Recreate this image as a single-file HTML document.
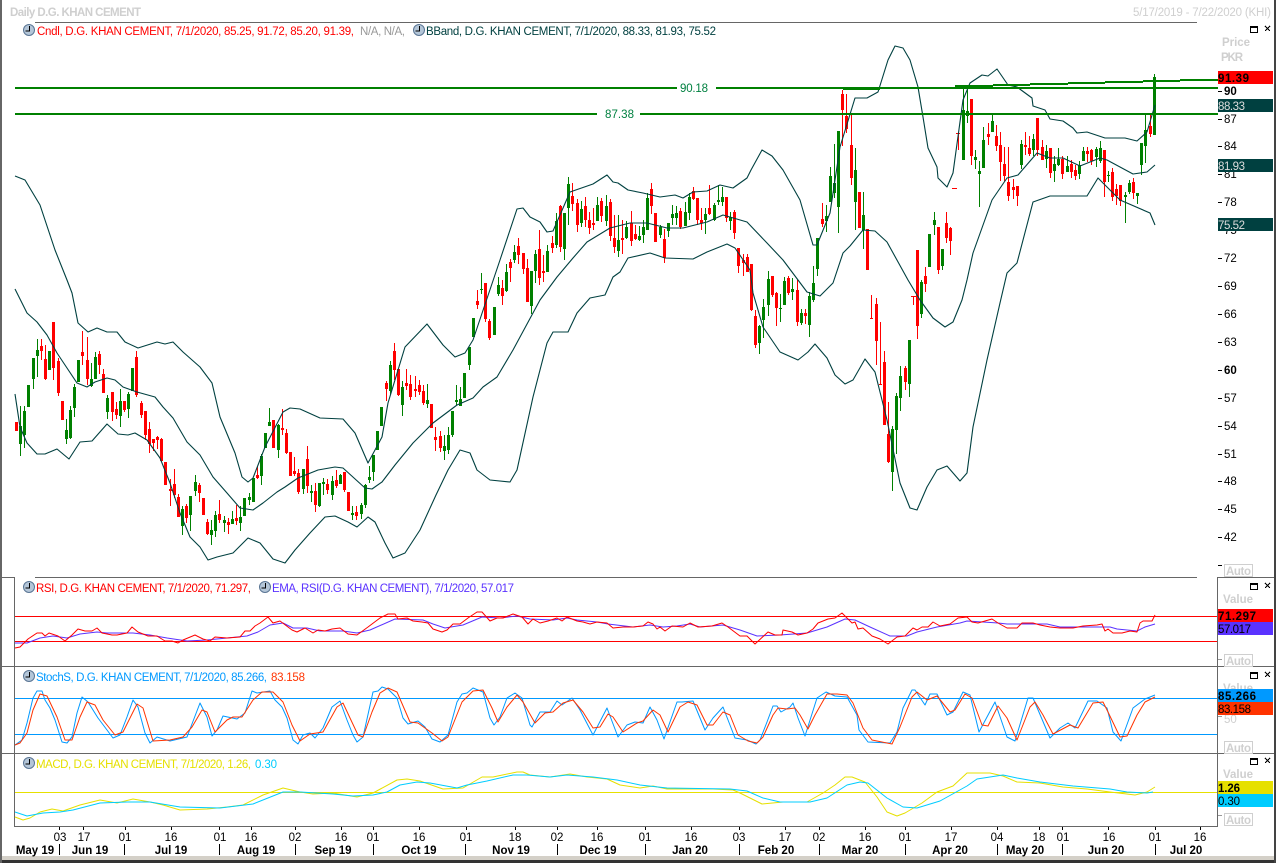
<!DOCTYPE html>
<html><head><meta charset="utf-8"><title>Daily D.G. KHAN CEMENT</title>
<style>
html,body{margin:0;padding:0;background:#fff}
svg{display:block}
text{font-family:"Liberation Sans",sans-serif;font-size:11.5px}
.b{font-weight:bold}
.l{fill:none;stroke-width:1;shape-rendering:crispEdges}
.s{fill:none;stroke-width:1;stroke-linejoin:round}
</style></head><body>
<svg width="1276" height="863" viewBox="0 0 1276 863" xmlns="http://www.w3.org/2000/svg">
<rect width="1276" height="863" fill="#fff"/>
<g shape-rendering="crispEdges">
<path fill="none" stroke="#008000" stroke-width="1" d="M20.5 406V456M24.5 406V448M28.5 385V407M33.5 358V389M37.5 339V377M49.5 351V370M66.5 419V444M70.5 406V439M74.5 384V417M78.5 360V382M91.5 363V387M95.5 352V379M107.5 395V419M120.5 389V427M128.5 392V418M132.5 368V391M182.5 506V535M190.5 496V531M195.5 475V496M211.5 520V545M215.5 511V537M224.5 516V532M232.5 511V524M240.5 506V531M244.5 498V516M249.5 493V505M253.5 478V502M261.5 454V485M265.5 433V448M269.5 408V426M278.5 424V458M303.5 469V494M311.5 485V502M319.5 483V507M323.5 478V495M332.5 476V500M340.5 474V484M352.5 506V520M361.5 503V519M365.5 484V508M369.5 466V483M373.5 455V481M377.5 431V450M381.5 407V426M390.5 361V395M402.5 381V416M427.5 384V408M444.5 435V460M448.5 427V454M452.5 411V437M456.5 385V405M460.5 387V406M464.5 373V398M469.5 347V370M473.5 318V337M481.5 273V294M494.5 307V335M498.5 277V296M506.5 264V292M514.5 245V263M531.5 271V314M535.5 250V283M547.5 245V272M556.5 213V248M564.5 213V260M568.5 177V225M581.5 201V227M597.5 197V221M606.5 195V226M618.5 215V257M626.5 221V239M639.5 226V241M643.5 220V243M647.5 193V230M660.5 225V238M668.5 223V237M672.5 205V225M676.5 206V225M685.5 202V226M689.5 193V220M705.5 208V234M714.5 203V221M718.5 185V205M722.5 187V206M730.5 212V230M759.5 325V354M763.5 299V338M768.5 271V316M780.5 294V322M784.5 277V305M792.5 278V300M801.5 309V325M809.5 292V337M813.5 266V302M817.5 238V276M826.5 205V232M830.5 167V202M834.5 144V198M838.5 131V233M855.5 148V230M863.5 192V249M892.5 426V491M896.5 393V454M900.5 366V411M909.5 340V397M921.5 280V318M929.5 234V267M934.5 212V235M942.5 249V270M963.5 87V160M967.5 88V123M975.5 150V169M979.5 161V207M983.5 127V168M992.5 115V132M1021.5 140V169M1033.5 134V156M1046.5 145V168M1054.5 156V182M1058.5 148V166M1067.5 156V172M1079.5 161V179M1083.5 147V161M1096.5 147V167M1100.5 141V163M1108.5 171V182M1125.5 192V223M1129.5 180V194M1137.5 193V204M1141.5 143V175M1145.5 114V163M1154.5 74V135"/>
<path fill="none" stroke="#008000" stroke-width="3" d="M20.5 426V444M24.5 411V435M28.5 385V407M33.5 358V379M37.5 350V356M49.5 351V370M66.5 430V439M70.5 410V438M74.5 387V408M78.5 360V382M91.5 379V386M95.5 357V379M107.5 398V412M120.5 401V416M128.5 394V409M132.5 368V391M182.5 509V526M190.5 496V515M195.5 482V491M211.5 530V535M215.5 515V531M224.5 520V523M232.5 519V524M240.5 517V523M244.5 498V516M249.5 497V500M253.5 478V502M261.5 456V476M265.5 433V448M269.5 422V426M278.5 425V450M303.5 469V489M311.5 491V493M319.5 483V506M323.5 482V484M332.5 481V495M340.5 475V484M352.5 513V515M361.5 505V514M365.5 485V505M369.5 477V480M373.5 455V472M377.5 431V450M381.5 407V426M390.5 365V391M402.5 387V405M427.5 400V404M444.5 446V451M448.5 435V450M452.5 411V435M456.5 400V402M460.5 399V406M464.5 373V398M469.5 347V365M473.5 318V337M481.5 289V290M494.5 307V335M498.5 285V294M506.5 272V291M514.5 252V260M531.5 271V306M535.5 254V271M547.5 251V272M556.5 221V245M564.5 213V249M568.5 184V208M581.5 209V223M597.5 205V221M606.5 206V221M618.5 240V251M626.5 227V238M639.5 236V240M643.5 227V235M647.5 198V230M660.5 227V235M668.5 223V231M672.5 214V218M676.5 213V218M685.5 212V226M689.5 197V213M705.5 214V220M714.5 205V220M718.5 200V202M722.5 197V202M730.5 217V221M759.5 326V343M763.5 307V320M768.5 279V305M780.5 308V309M784.5 281V305M792.5 289V292M801.5 313V323M809.5 296V325M813.5 283V300M817.5 238V269M826.5 216V221M830.5 176V202M834.5 183V193M838.5 131V207M855.5 170V202M863.5 215V230M892.5 429V472M896.5 396V430M900.5 376V398M909.5 340V384M921.5 282V314M929.5 234V267M934.5 220V225M942.5 249V266M963.5 110V160M967.5 111V116M975.5 157V160M979.5 171V174M983.5 140V168M992.5 121V132M1021.5 144V165M1033.5 139V150M1046.5 151V159M1054.5 164V171M1058.5 159V165M1067.5 166V172M1079.5 165V174M1083.5 151V161M1096.5 149V157M1100.5 148V161M1108.5 175V176M1125.5 195V197M1129.5 183V192M1137.5 193V196M1141.5 143V165M1145.5 130V146M1154.5 77V135"/>
<path fill="none" stroke="#ff0000" stroke-width="1" d="M16.5 422V431M41.5 339V360M45.5 345V380M53.5 322V380M58.5 358V396M62.5 401V420M82.5 331V365M87.5 337V385M99.5 351V374M103.5 369V393M112.5 392V421M116.5 402V419M124.5 401V412M136.5 351V397M141.5 401V418M145.5 411V440M149.5 422V453M153.5 439V451M157.5 436V449M161.5 438V462M165.5 462V485M170.5 479V506M174.5 469V498M178.5 494V517M186.5 504V523M199.5 483V502M203.5 498V515M207.5 519V535M219.5 500V523M228.5 518V534M236.5 505V525M257.5 466V479M273.5 420V448M282.5 409V435M286.5 429V454M290.5 452V476M294.5 457V476M298.5 469V494M307.5 446V493M315.5 483V512M327.5 479V494M336.5 470V488M344.5 472V492M348.5 492V511M356.5 506V520M386.5 381V401M394.5 343V380M398.5 369V396M406.5 369V390M410.5 375V400M415.5 376V397M419.5 380V395M423.5 385V405M431.5 404V428M435.5 427V451M440.5 431V452M477.5 290V309M485.5 283V322M489.5 319V340M502.5 280V305M510.5 259V282M518.5 238V264M523.5 253V274M527.5 259V302M539.5 230V285M543.5 255V282M552.5 236V253M560.5 205V252M572.5 183V211M577.5 199V232M585.5 197V227M589.5 212V234M593.5 208V230M601.5 198V222M610.5 199V241M614.5 215V253M622.5 220V254M631.5 211V246M635.5 225V240M651.5 183V214M655.5 213V242M664.5 229V263M680.5 208V229M693.5 187V200M697.5 198V225M701.5 208V230M709.5 185V215M726.5 197V222M734.5 210V239M738.5 248V273M743.5 254V276M747.5 254V272M751.5 264V311M755.5 310V348M772.5 276V297M776.5 292V326M788.5 276V295M797.5 280V326M805.5 309V324M822.5 203V227M842.5 90V146M846.5 94V133M851.5 115V185M859.5 192V228M867.5 229V270M871.5 295V319M876.5 298V365M880.5 322V385M884.5 351V425M888.5 402V463M905.5 366V390M913.5 296V305M917.5 250V339M925.5 267V292M938.5 227V274M946.5 212V243M950.5 227V255M958.5 132V150M971.5 99V165M988.5 123V145M996.5 125V151M1000.5 132V181M1004.5 147V181M1008.5 147V201M1013.5 179V199M1017.5 186V206M1025.5 132V155M1029.5 136V156M1037.5 118V156M1042.5 140V160M1050.5 148V178M1062.5 156V179M1071.5 160V178M1075.5 165V180M1087.5 147V162M1091.5 149V165M1104.5 150V197M1112.5 168V201M1116.5 184V205M1120.5 185V206M1133.5 178V199M1150.5 114V137"/>
<path fill="none" stroke="#ff0000" stroke-width="3" d="M16.5 422V431M41.5 346V351M45.5 359V379M53.5 322V368M58.5 361V393M62.5 401V420M82.5 352V356M87.5 360V379M99.5 354V365M103.5 374V393M112.5 392V412M116.5 409V415M124.5 401V410M136.5 357V395M141.5 403V415M145.5 411V435M149.5 429V444M153.5 439V443M157.5 437V440M161.5 439V461M165.5 462V485M170.5 489V491M174.5 484V495M178.5 497V517M186.5 506V518M199.5 485V493M203.5 498V515M207.5 522V534M219.5 514V520M228.5 522V525M236.5 518V521M257.5 475V478M273.5 420V448M282.5 428V430M286.5 433V453M290.5 452V476M294.5 471V474M298.5 473V492M307.5 459V486M315.5 491V505M327.5 484V490M336.5 480V486M344.5 472V490M348.5 492V511M356.5 512V516M386.5 383V389M394.5 351V370M398.5 369V395M406.5 383V386M410.5 384V397M415.5 389V391M419.5 385V392M423.5 391V403M431.5 404V428M435.5 437V440M440.5 436V448M477.5 301V305M485.5 283V319M489.5 321V338M502.5 288V296M510.5 262V268M518.5 246V255M523.5 253V269M527.5 268V302M539.5 249V278M543.5 271V273M552.5 243V248M560.5 206V247M572.5 196V204M577.5 203V225M585.5 206V220M589.5 220V228M593.5 223V225M601.5 201V216M610.5 202V236M614.5 238V247M622.5 238V240M631.5 223V241M635.5 234V239M651.5 189V206M655.5 213V242M664.5 239V258M680.5 211V227M693.5 191V199M697.5 198V220M701.5 220V223M709.5 208V214M726.5 197V218M734.5 212V233M738.5 248V266M743.5 260V263M747.5 257V272M751.5 264V310M755.5 316V345M772.5 276V295M776.5 293V308M788.5 278V293M797.5 290V322M805.5 313V316M822.5 219V224M842.5 94V110M846.5 116V129M851.5 145V178M859.5 192V228M867.5 229V270M876.5 304V341M880.5 384V385M884.5 362V425M888.5 434V462M905.5 368V382M917.5 250V326M925.5 276V284M938.5 227V270M946.5 223V238M950.5 228V241M971.5 99V156M988.5 134V137M996.5 136V146M1000.5 145V162M1004.5 164V176M1008.5 182V196M1013.5 187V190M1017.5 186V196M1025.5 145V147M1029.5 148V154M1037.5 118V150M1042.5 147V160M1050.5 148V173M1062.5 159V174M1071.5 164V172M1075.5 170V176M1087.5 151V154M1091.5 150V161M1104.5 150V182M1112.5 172V197M1116.5 189V196M1120.5 185V201M1133.5 182V193M1150.5 126V134"/>
<path fill="none" stroke="#ff0000" stroke-width="1" d="M870 318.5h3M911 296.5h5M952 188.5h5M956 133.5h4"/>
</g>
<g fill="none" stroke="#004040" stroke-width="1.1" stroke-linejoin="round">
<polyline points="15,176 25,180 40,205 55,250 67,280 72,293 78,323 88,332 97,328 107,332 117,332 125,342 138,348 157,342 165,344 173,342 183,352 200,367 212,383 220,417 235,453 242,477 248,482 253,478 265,447 283,412 290,408 300,409 320,418 343,419 355,433 368,463 382,437 388,403 405,347 427,324 443,345 455,357 465,353 473,340 500,260 517,209 523,208 530,217 540,222 547,232 553,231 570,192 593,184 607,175 613,182 618,183 628,190 643,193 660,197 675,195 683,198 693,192 707,191 720,185 733,188 747,178 751,170 762,150 772,156 783,170 800,200 813,245 817,245 830,213 840,147 855,98 867,98 878,92 888,60 895,46 903,48 910,60 918,87 923,117 928,148 937,167 938,178 947,187 953,173 963,100 970,83 982,75 988,76 997,69 1008,85 1017,87 1032,98 1033,106 1045,110 1050,119 1063,121 1073,128 1077,133 1087,132 1105,138 1125,138 1137,141 1147,132 1155,105"/>
<polyline points="15,289 27,313 37,322 47,335 57,353 67,368 77,383 87,387 95,382 107,378 115,380 123,387 137,392 155,397 163,407 173,418 187,442 200,455 213,477 227,493 240,508 253,510 263,503 277,492 285,487 298,478 318,470 335,467 343,468 365,488 372,489 382,482 395,465 413,443 433,423 457,405 473,398 483,387 497,377 513,350 540,300 557,277 573,258 587,242 610,228 630,223 647,223 667,228 683,228 707,222 723,215 747,222 767,243 783,260 807,292 820,296 833,283 843,253 850,246 863,230 875,231 887,242 908,280 920,300 933,318 945,327 953,322 962,300 967,280 973,253 992,200 1007,178 1018,175 1037,153 1050,158 1063,158 1080,166 1100,158 1107,160 1133,174 1147,172 1155,165"/>
<polyline points="15,394 20,427 27,443 37,454 45,454 57,449 69,459 80,442 92,441 107,424 118,434 128,435 135,433 147,440 160,458 170,483 180,513 190,537 200,547 208,560 217,557 233,553 248,538 260,543 273,559 285,563 295,550 310,533 325,517 335,516 348,522 357,527 368,517 375,522 385,543 393,558 405,553 420,530 436,495 448,470 460,450 470,453 477,470 490,480 510,482 517,470 533,397 547,343 553,332 568,332 577,313 590,298 605,295 613,277 620,272 628,258 650,253 665,258 693,259 707,252 727,244 735,248 750,270 753,293 763,327 780,352 798,360 808,352 815,344 827,358 835,375 845,384 853,380 865,359 875,372 887,420 900,483 910,508 917,510 927,487 937,470 947,466 960,481 967,473 973,427 987,360 1000,303 1007,273 1017,263 1033,202 1050,196 1087,196 1098,178 1120,200 1150,213 1155,225"/>
</g>
<g shape-rendering="crispEdges" stroke="#008000" stroke-width="2" fill="none">
<path d="M15 88H677M716 88H1218M15 114H597M640 114H1218"/>
<path d="M843 89H880M955 86H993M993 85H1030M1030 84H1068M1068 83H1105M1105 82H1143M1143 81H1180M1180 80H1218"/>
</g>
<text x="680" y="92" fill="#008040" textLength="28" lengthAdjust="spacing">90.18</text>
<text x="605" y="118" fill="#008040" textLength="29" lengthAdjust="spacing">87.38</text>

<!-- frame -->
<g shape-rendering="crispEdges">
<rect x="0" y="856" width="1276" height="4" fill="#d4d0c8"/>
<rect x="0" y="860" width="1276" height="3" fill="#333"/>
<rect x="0" y="0" width="2" height="863" fill="#666"/>
<rect x="1274" y="0" width="2" height="863" fill="#444"/>
<g fill="none" stroke="#666" stroke-width="1">
<path d="M35 22.5H1197M2 577.5H14M35 577.5H1197M1217 577.5H1274M14.5 577V826.5H1217M1217.5 577V827M2 666.5H1274M2 753.5H1274"/>
</g>
</g>
<text x="10" y="16" class="b" fill="#cfcfcf" textLength="131" lengthAdjust="spacing">Daily D.G. KHAN CEMENT</text>
<text x="1133" y="16" fill="#cfcfcf" textLength="138" lengthAdjust="spacing">5/17/2019 - 7/22/2020 (KHI)</text>

<!-- clocks -->
<g stroke="#5a7594" stroke-width="1" fill="#b4c6d8">
<circle cx="29" cy="30" r="5.5"/><circle cx="419" cy="30" r="5.5"/><circle cx="29" cy="587" r="5.5"/><circle cx="265" cy="587" r="5.5"/><circle cx="29" cy="676" r="5.5"/><circle cx="29" cy="763" r="5.5"/>
</g>
<g stroke="#000" stroke-width="1" fill="none" shape-rendering="crispEdges">
<path d="M29.5 26v5h-4M419.5 26v5h-4M29.5 583v5h-4M265.5 583v5h-4M29.5 672v5h-4M29.5 759v5h-4"/>
</g>

<!-- legends -->
<text x="37" y="35" fill="#ff0000" textLength="317" lengthAdjust="spacing">Cndl, D.G. KHAN CEMENT, 7/1/2020, 85.25, 91.72, 85.20, 91.39,</text>
<text x="360" y="35" fill="#999" textLength="45" lengthAdjust="spacing">N/A, N/A,</text>
<text x="426" y="35" fill="#004040" textLength="290" lengthAdjust="spacing">BBand, D.G. KHAN CEMENT, 7/1/2020, 88.33, 81.93, 75.52</text>
<text x="36" y="592" fill="#ff0000" textLength="215" lengthAdjust="spacing">RSI, D.G. KHAN CEMENT, 7/1/2020, 71.297,</text>
<text x="272" y="592" fill="#5a32ff" textLength="242" lengthAdjust="spacing">EMA, RSI(D.G. KHAN CEMENT), 7/1/2020, 57.017</text>
<text x="36" y="681" fill="#0099ff" textLength="231" lengthAdjust="spacing">StochS, D.G. KHAN CEMENT, 7/1/2020, 85.266,</text>
<text x="271" y="681" fill="#ff3300" textLength="34" lengthAdjust="spacing">83.158</text>
<text x="36" y="768" fill="#e6e000" textLength="215" lengthAdjust="spacing">MACD, D.G. KHAN CEMENT, 7/1/2020, 1.26,</text>
<text x="255" y="768" fill="#00ccff" textLength="22" lengthAdjust="spacing">0.30</text>

<!-- RSI -->
<g shape-rendering="crispEdges" fill="none" stroke-width="1">
<path stroke="#ff0000" d="M15 616.5H1217M15 641.5H1217"/>
<path stroke="#0099ff" d="M15 698.5H1217M15 734.5H1217"/>
<path stroke="#e6e000" d="M15 792.5H1217"/>
</g>
<polyline class="s" stroke="#5a32ff" points="15,643 27,643 40,638 53,636 67,638 80,634 97,632 107,633 133,633 150,635 167,638 187,641 207,640 227,638 247,636 258,632 270,625 283,623 293,628 307,628 320,631 343,631 357,633 370,630 395,619 423,620 433,624 445,628 463,625 482,617 500,618 517,616 530,619 553,620 567,618 577,620 597,622 608,624 633,627 650,625 663,627 677,626 690,624 700,627 723,625 740,630 757,636 780,635 807,633 827,627 845,619 855,620 870,627 890,636 907,636 917,632 937,627 960,623 967,621 983,622 998,623 1007,624 1047,624 1060,627 1080,627 1110,627 1117,629 1137,631 1145,627 1155,624"/>
<polyline class="s" stroke="#ff0000" points="15,648 20,647 28,639 37,633 42,633 45,636 49,633 58,636 65,641 72,635 78,629 85,631 92,631 97,628 102,633 112,635 117,635 127,633 132,627 138,632 148,636 157,636 165,641 172,641 178,643 183,640 195,635 203,639 210,641 215,637 227,638 240,637 245,631 250,631 255,626 260,623 268,617 273,623 280,621 292,630 297,632 305,628 313,633 318,630 325,631 332,629 340,628 348,634 357,635 368,627 380,618 388,614 395,614 398,619 407,618 413,621 422,622 428,623 433,629 442,632 447,630 453,624 460,624 468,618 477,612 482,612 490,621 497,618 503,618 513,614 522,617 528,624 533,619 540,623 548,621 557,618 562,621 567,617 577,621 583,622 590,624 597,622 607,623 613,628 623,627 633,627 643,626 648,622 653,624 657,629 660,627 665,631 672,626 683,627 690,623 698,627 712,626 722,623 728,627 740,636 747,636 755,644 768,632 775,635 782,635 783,630 792,632 798,635 807,633 813,629 818,623 828,619 835,618 842,613 847,618 852,623 855,622 858,629 863,628 872,636 880,639 888,644 897,637 905,636 913,628 917,630 922,627 928,627 933,622 940,626 950,624 958,618 967,617 972,622 978,623 985,621 992,619 998,623 1007,628 1017,628 1022,623 1033,623 1040,625 1050,627 1060,628 1073,628 1083,626 1097,625 1102,624 1105,631 1108,629 1113,633 1122,633 1130,631 1137,632 1140,623 1143,621 1152,621 1155,615"/>

<!-- Stoch -->
<polyline class="s" stroke="#0099ff" points="15,745 22,740 27,723 33,698 37,691 42,691 45,700 50,708 55,720 62,742 67,743 72,737 77,713 82,697 88,702 98,718 113,738 120,735 127,717 133,700 138,707 145,733 150,743 157,737 170,741 187,737 200,703 207,717 212,736 217,730 223,716 237,719 245,713 252,691 257,693 270,691 275,700 282,707 287,718 293,740 298,744 303,735 310,733 315,738 323,728 332,707 340,701 347,720 353,735 357,742 363,737 373,692 378,691 382,687 388,689 397,698 403,718 408,724 418,721 425,727 432,739 440,742 448,735 457,702 462,694 467,693 473,688 483,692 490,718 494,725 500,717 507,698 515,693 522,698 530,725 532,727 540,712 550,712 557,701 562,705 572,698 580,710 593,735 607,708 618,737 627,725 635,722 643,723 650,707 657,720 664,739 677,702 682,702 693,701 705,730 713,718 723,707 735,738 747,740 756,744 760,740 767,722 773,706 777,706 781,712 790,707 793,703 798,718 805,736 817,698 826,692 835,696 847,697 857,715 859,730 868,742 890,743 897,732 903,708 912,690 915,690 925,705 930,694 937,694 947,715 953,712 963,692 970,695 979,732 995,702 1007,737 1015,741 1028,698 1033,698 1050,738 1060,728 1068,723 1075,728 1088,701 1097,701 1107,708 1113,732 1121,741 1133,708 1145,699 1155,695"/>
<polyline class="s" stroke="#ff3300" points="15,745 20,743 27,733 33,710 40,694 47,696 57,717 65,740 72,740 80,717 87,702 95,705 103,720 115,735 123,732 137,704 143,708 153,741 170,740 183,737 192,727 202,710 207,712 215,732 227,720 233,717 242,717 253,700 262,692 273,692 283,702 292,725 300,741 310,734 323,732 337,707 343,703 350,718 358,735 363,737 372,712 380,693 388,688 397,692 410,722 418,723 432,733 442,741 448,737 462,702 473,691 483,690 492,708 498,722 507,707 517,695 523,702 535,723 545,713 553,712 563,703 573,700 583,712 593,728 600,727 608,714 613,717 623,732 637,723 643,721 653,710 660,715 668,732 680,707 688,702 697,705 707,725 713,725 723,712 730,715 738,735 748,741 757,743 763,737 773,715 778,708 787,709 795,708 800,715 808,729 815,715 827,694 837,694 847,695 853,703 863,728 872,740 892,744 900,727 912,697 917,692 927,700 937,696 950,712 955,710 965,694 972,698 982,725 988,726 998,706 1007,718 1017,740 1030,707 1035,702 1043,715 1053,734 1070,725 1078,728 1093,703 1103,702 1108,712 1120,737 1127,736 1137,715 1145,702 1155,697"/>

<!-- MACD -->
<polyline class="s" stroke="#e6e000" points="15,817 23,820 30,818 40,812 52,809 63,811 80,805 100,800 117,803 133,799 150,802 163,805 180,810 207,809 227,807 243,805 263,795 283,788 300,792 313,794 333,793 357,797 373,793 397,780 407,779 420,781 443,789 463,788 482,777 493,777 517,772 523,772 530,775 550,777 570,774 587,777 607,779 620,785 640,788 653,786 667,789 713,789 733,790 740,793 750,798 762,804 783,802 807,802 823,793 835,785 845,777 852,777 865,782 877,797 887,812 897,816 905,813 922,803 937,792 953,786 967,773 990,773 1003,776 1017,782 1040,783 1063,787 1087,789 1110,792 1135,795 1147,792 1155,787"/>
<polyline class="s" stroke="#00ccff" points="15,812 27,816 43,813 60,812 73,810 100,803 127,802 150,802 180,807 220,808 253,804 283,792 300,792 333,794 353,796 373,795 387,792 400,785 417,782 430,783 457,788 467,785 487,781 513,775 527,775 550,777 567,775 593,777 617,780 640,785 667,788 730,789 747,791 763,798 780,802 810,802 827,798 847,785 860,782 868,783 887,798 903,807 917,808 940,801 967,786 977,779 1003,775 1017,778 1040,782 1073,786 1110,789 1127,792 1147,793 1153,792"/>

<!-- right scale main -->
<g shape-rendering="crispEdges" fill="none" stroke="#000" stroke-width="1">
<path d="M1218 91.5h4M1218 119.5h4M1218 146.5h4M1218 174.5h4M1218 202.5h4M1218 230.5h4M1218 258.5h4M1218 286.5h4M1218 314.5h4M1218 342.5h4M1218 370.5h4M1218 398.5h4M1218 426.5h4M1218 454.5h4M1218 481.5h4M1218 509.5h4M1218 537.5h4M1218 565.5h4"/>
</g>
<text x="1224" y="95" class="b">90</text>
<text x="1224" y="123">87</text><text x="1224" y="150">84</text><text x="1224" y="178">81</text><text x="1224" y="206">78</text><text x="1224" y="234">75</text><text x="1224" y="262">72</text><text x="1224" y="290">69</text><text x="1224" y="318">66</text><text x="1224" y="346">63</text>
<text x="1224" y="374" class="b">60</text>
<text x="1224" y="402">57</text><text x="1224" y="430">54</text><text x="1224" y="458">51</text><text x="1224" y="485">48</text><text x="1224" y="513">45</text><text x="1224" y="541">42</text>

<text x="1222" y="46" class="b" fill="#cfcfcf" textLength="28" lengthAdjust="spacing">Price</text>
<text x="1221" y="61" class="b" fill="#cfcfcf" textLength="22" lengthAdjust="spacing">PKR</text>
<text x="1223" y="603" class="b" fill="#cfcfcf" textLength="30" lengthAdjust="spacing">Value</text>
<text x="1223" y="692" class="b" fill="#cfcfcf" textLength="30" lengthAdjust="spacing">Value</text>
<text x="1223" y="778" class="b" fill="#cfcfcf" textLength="30" lengthAdjust="spacing">Value</text>
<text x="1224" y="723" fill="#cfcfcf">50</text>

<g shape-rendering="crispEdges">
<path stroke="#999" fill="none" d="M1218 659.5h4M1218 716.5h4M1218 815.5h4"/>
<rect x="1218" y="71" width="55" height="13" fill="#ff0000"/>
<rect x="1218" y="99" width="55" height="13" fill="#004040"/>
<rect x="1218" y="159" width="55" height="13" fill="#004040"/>
<rect x="1218" y="218" width="55" height="13" fill="#004040"/>
<rect x="1218" y="609" width="55" height="13" fill="#ff0000"/>
<rect x="1218" y="622" width="55" height="13" fill="#5a32ff"/>
<rect x="1218" y="689" width="55" height="13" fill="#0099ff"/>
<rect x="1218" y="702" width="55" height="13" fill="#ff3300"/>
<rect x="1218" y="781" width="55" height="13" fill="#e6e000"/>
<rect x="1218" y="794" width="55" height="13" fill="#00ccff"/>
</g>
<text x="1218" y="82" class="b" fill="#000" textLength="31" lengthAdjust="spacing">91.39</text>
<text x="1218" y="110" fill="#ddd" textLength="27" lengthAdjust="spacing">88.33</text>
<text x="1218" y="170" fill="#ddd" textLength="27" lengthAdjust="spacing">81.93</text>
<text x="1218" y="229" fill="#ddd" textLength="27" lengthAdjust="spacing">75.52</text>
<text x="1218" y="620" class="b" fill="#000" textLength="38" lengthAdjust="spacing">71.297</text>
<text x="1218" y="633" fill="#000" textLength="33" lengthAdjust="spacing">57.017</text>
<text x="1218" y="700" class="b" fill="#000" textLength="38" lengthAdjust="spacing">85.266</text>
<text x="1218" y="713" fill="#000" textLength="33" lengthAdjust="spacing">83.158</text>
<text x="1218" y="792" class="b" fill="#000" textLength="22" lengthAdjust="spacing">1.26</text>
<text x="1218" y="805" fill="#000" textLength="22" lengthAdjust="spacing">0.30</text>

<!-- window buttons -->
<g shape-rendering="crispEdges" fill="none" stroke="#000" stroke-width="1">
<path d="M1250.5 26.5h7v6h-7zM1250 27.5h8M1265 26l5 5M1270 26l-5 5"/>
<path d="M1250.5 583.5h7v6h-7zM1250 584.5h8M1265 583l5 5M1270 583l-5 5"/>
<path d="M1250.5 672.5h7v6h-7zM1250 673.5h8M1265 672l5 5M1270 672l-5 5"/>
<path d="M1250.5 758.5h7v6h-7zM1250 759.5h8M1265 758l5 5M1270 758l-5 5"/>
</g>

<!-- auto boxes -->
<g shape-rendering="crispEdges" fill="#fff" stroke="#cfcfcf" stroke-width="1">
<rect x="1224.5" y="564.5" width="28" height="12"/>
<rect x="1224.5" y="654.5" width="28" height="12"/>
<rect x="1224.5" y="741.5" width="28" height="12"/>
<rect x="1224.5" y="813.5" width="28" height="12"/>
</g>
<g class="b" fill="#cfcfcf" font-weight="bold">
<text x="1226" y="575" textLength="25" lengthAdjust="spacing">Auto</text>
<text x="1226" y="665" textLength="25" lengthAdjust="spacing">Auto</text>
<text x="1226" y="752" textLength="25" lengthAdjust="spacing">Auto</text>
<text x="1226" y="824" textLength="25" lengthAdjust="spacing">Auto</text>
</g>

<!-- date axis -->
<g shape-rendering="crispEdges" fill="none" stroke="#000" stroke-width="1">
<path d="M59.5 827v3M83.5 827v3M125.5 827v3M171.5 827v3M219.5 827v3M251.5 827v3M295.5 827v3M341.5 827v3M373.5 827v3M419.5 827v3M466.5 827v3M515.5 827v3M557.5 827v3M597.5 827v3M645.5 827v3M691.5 827v3M739.5 827v3M785.5 827v3M819.5 827v3M865.5 827v3M905.5 827v3M951.5 827v3M997.5 827v3M1039.5 827v3M1062.5 827v3M1108.5 827v3M1155.5 827v3M1200.5 827v3"/>
<path d="M59.5 844v11M124.5 844v11M219.5 844v11M295.5 844v11M373.5 844v11M465.5 844v11M557.5 844v11M645.5 844v11M739.5 844v11M819.5 844v11M905.5 844v11M997.5 844v11M1062.5 844v11M1155.5 844v11"/>
</g>
<g fill="#000" text-anchor="middle">
<text x="60" y="841">03</text><text x="84" y="841">17</text><text x="125" y="841">01</text><text x="171" y="841">16</text><text x="220" y="841">01</text><text x="251" y="841">16</text><text x="295" y="841">02</text><text x="341" y="841">16</text><text x="373" y="841">01</text><text x="419" y="841">16</text><text x="466" y="841">01</text><text x="515" y="841">18</text><text x="557" y="841">02</text><text x="597" y="841">16</text><text x="645" y="841">01</text><text x="691" y="841">16</text><text x="739" y="841">03</text><text x="785" y="841">17</text><text x="819" y="841">02</text><text x="865" y="841">16</text><text x="905" y="841">01</text><text x="951" y="841">17</text><text x="997" y="841">04</text><text x="1039" y="841">18</text><text x="1063" y="841">01</text><text x="1109" y="841">16</text><text x="1155" y="841">01</text><text x="1200" y="841">16</text>
</g>
<g fill="#000" class="b" text-anchor="middle" font-weight="bold">
<text x="35" y="854" class="b">May 19</text><text x="90" y="854" class="b">Jun 19</text><text x="171" y="854" class="b">Jul 19</text><text x="256" y="854" class="b">Aug 19</text><text x="333" y="854" class="b">Sep 19</text><text x="419" y="854" class="b">Oct 19</text><text x="511" y="854" class="b">Nov 19</text><text x="598" y="854" class="b">Dec 19</text><text x="690" y="854" class="b">Jan 20</text><text x="776" y="854" class="b">Feb 20</text><text x="860" y="854" class="b">Mar 20</text><text x="950" y="854" class="b">Apr 20</text><text x="1025" y="854" class="b">May 20</text><text x="1106" y="854" class="b">Jun 20</text><text x="1186" y="854" class="b">Jul 20</text>
</g>
</svg>
</body></html>
